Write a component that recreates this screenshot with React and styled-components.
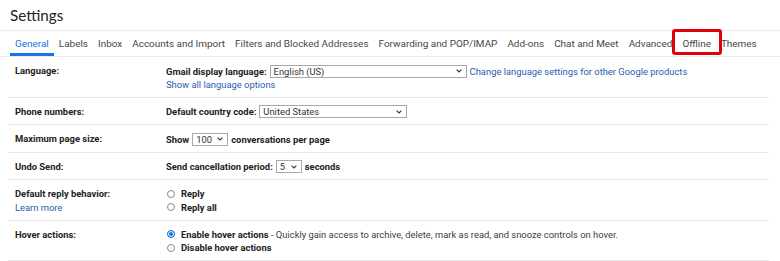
import React from 'react';
import styled, { createGlobalStyle } from 'styled-components';

const GlobalStyle = createGlobalStyle`
  html, body {
    margin: 0;
    padding: 0;
    background: #ffffff;
  }
  body {
    font-family: Roboto, "Liberation Sans", Arial, sans-serif;
    color: #202124;
  }
`;

const tabs = [
  'General',
  'Labels',
  'Inbox',
  'Accounts and Import',
  'Filters and Blocked Addresses',
  'Forwarding and POP/IMAP',
  'Add-ons',
  'Chat and Meet',
  'Advanced',
  'Offline',
  'Themes',
];

const Chevron = () => (
  <svg width="6" height="4" viewBox="0 0 6 4">
    <path d="M0.6 0.6 L3 3 L5.4 0.6" fill="none" stroke="#333" strokeWidth="1.1" />
  </svg>
);

const Select = ({ value, width }) => (
  <SelectBox $width={width}>
    <SelectText>{value}</SelectText>
    <Chevron />
  </SelectBox>
);

const Radio = ({ checked, children }) => (
  <RadioLine>
    <RadioDot $checked={checked} />
    {children}
  </RadioLine>
);

const App = () => {
  return (
    <>
      <GlobalStyle />
      <Page>
        <Header>
          <Title>Settings</Title>
        </Header>
        <TabBar>
          {tabs.map((t) => (
            <Tab key={t} $active={t === 'General'} $marked={t === 'Offline'}>
              {t}
            </Tab>
          ))}
        </TabBar>

        <Row>
          <Label>Language:</Label>
          <Value>
            <Line>
              <b>Gmail display language:</b>
              <Select value="English (US)" width={197} />
              <Link>Change language settings for other Google products</Link>
            </Line>
            <Line $small>
              <Link>Show all language options</Link>
            </Line>
          </Value>
        </Row>

        <Row>
          <Label>Phone numbers:</Label>
          <Value>
            <Line>
              <b>Default country code:</b>
              <Select value="United States" width={148} />
            </Line>
          </Value>
        </Row>

        <Row>
          <Label>Maximum page size:</Label>
          <Value>
            <Line>
              <b>Show</b>
              <Select value="100" width={36} />
              <b>conversations per page</b>
            </Line>
          </Value>
        </Row>

        <Row>
          <Label>Undo Send:</Label>
          <Value>
            <Line>
              <b>Send cancellation period:</b>
              <Select value="5" width={26} />
              <b>seconds</b>
            </Line>
          </Value>
        </Row>

        <Row>
          <Label>
            Default reply behavior:
            <LabelLink>Learn more</LabelLink>
          </Label>
          <Value>
            <Radio><b>Reply</b></Radio>
            <Radio><b>Reply all</b></Radio>
          </Value>
        </Row>

        <Row>
          <Label>Hover actions:</Label>
          <Value>
            <Radio checked>
              <span>
                <b>Enable hover actions</b>
                <Hint> - Quickly gain access to archive, delete, mark as read, and snooze controls on hover.</Hint>
              </span>
            </Radio>
            <Radio><b>Disable hover actions</b></Radio>
          </Value>
        </Row>
      </Page>
    </>
  );
};

const Page = styled.div`
  width: 780px;
  height: 261px;
  overflow: hidden;
`;

const Header = styled.div`
  height: 31px;
  display: flex;
  align-items: center;
  padding-left: 10px;
  border-bottom: 1px solid #ececec;
  box-sizing: border-box;
`;

const Title = styled.h1`
  margin: 0;
  font-family: Lato, Roboto, sans-serif;
  font-weight: 400;
  font-size: 15.2px;
  color: #202124;
`;

const TabBar = styled.div`
  display: flex;
  height: 26px;
  padding-left: 10px;
  border-bottom: 1px solid #ececec;
  box-sizing: border-box;
`;

const Tab = styled.div`
  display: flex;
  align-items: center;
  padding: 2px 5px 0;
  font-size: 9.95px;
  color: ${(p) => (p.$active ? '#1a73e8' : '#444746')};
  border-bottom: 3px solid ${(p) => (p.$active ? '#1a73e8' : 'transparent')};
  position: relative;

  ${(p) =>
    p.$marked &&
    `
    &::after {
      content: '';
      position: absolute;
      left: -5px;
      right: -6px;
      top: -2px;
      bottom: -2px;
      border: 3px solid #e0000b;
      border-radius: 3px;
    }
  `}
`;

const Row = styled.div`
  display: flex;
  margin: 0 11px 0 8px;
  padding: 7px 0 5.5px;
  border-bottom: 1px solid #e8e8e8;
  font-size: 9.4px;
  line-height: 13px;
  color: #222;
`;

const Label = styled.div`
  width: 151px;
  padding-left: 7px;
  display: flex;
  flex-direction: column;
  font-weight: 700;
`;

const LabelLink = styled.span`
  font-weight: 400;
  color: #2a5db0;
  margin-top: 0.5px;
`;

const Value = styled.div`
  display: flex;
  flex-direction: column;
`;

const Line = styled.div`
  display: flex;
  align-items: center;
  gap: 3px;
  min-height: ${(p) => (p.$small ? '12.5px' : '14px')};
`;

const Link = styled.span`
  color: #2a5db0;
`;

const Hint = styled.span`
  color: #3c4043;
`;

const SelectBox = styled.span`
  display: inline-flex;
  align-items: center;
  justify-content: space-between;
  box-sizing: border-box;
  width: ${(p) => p.$width}px;
  height: 13px;
  border: 1px solid #a8a8a8;
  padding: 0 4px 0 3px;
  background: #fff;
`;

const SelectText = styled.span`
  font-weight: 400;
  color: #333;
`;

const RadioLine = styled.div`
  display: flex;
  align-items: center;
  gap: 6px;
  min-height: 13.5px;
  padding-left: 1px;
`;

const RadioDot = styled.span`
  flex: none;
  box-sizing: border-box;
  width: 8px;
  height: 8px;
  border-radius: 50%;
  border: 1px solid ${(p) => (p.$checked ? '#1a73e8' : '#8a8a8a')};
  background: ${(p) => (p.$checked ? '#1a73e8' : '#fff')};
  box-shadow: ${(p) => (p.$checked ? 'inset 0 0 0 1px #fff' : 'none')};
`;

export default App;
